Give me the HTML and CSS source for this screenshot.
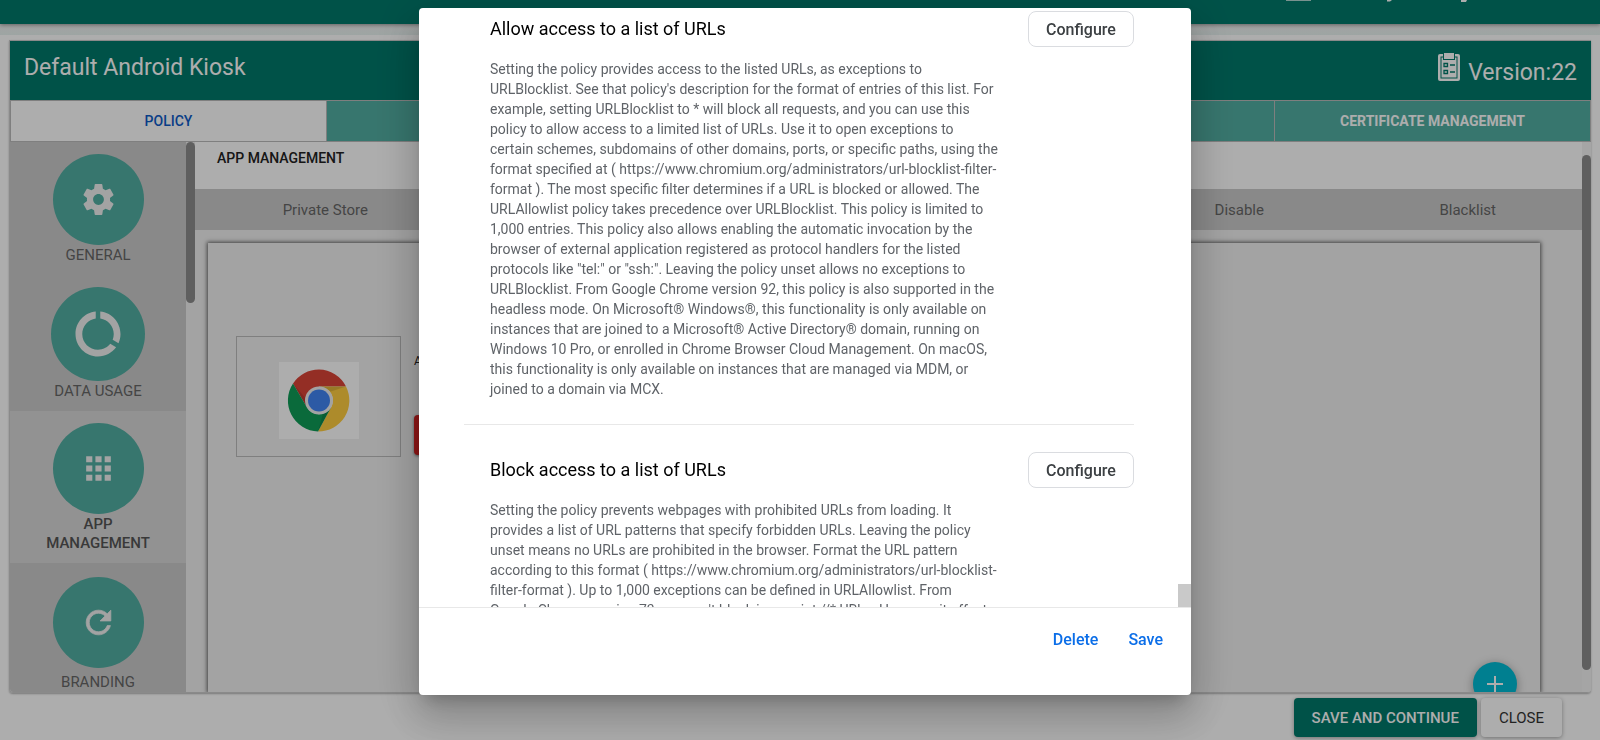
FILE: index.html
```html
<!DOCTYPE html>
<html lang="en">
<head>
<meta charset="utf-8">
<title>Default Android Kiosk</title>
<link rel="stylesheet" href="styles.css">
</head>
<body>
<div class="page">
  <header class="topbar">
    <svg class="topbar-marks" viewBox="0 0 184 3" aria-hidden="true"><path d="M0 0h25v1H0z" opacity=".7"/><path d="M101 0h5l-2 1.500h-3zM175 0h6l-1 2h-5z"/></svg>
  </header>
  <div class="strip"></div>

  <main class="profile">
    <div class="profile-head">
      <h1 class="profile-name">Default Android Kiosk</h1>
      <div class="version">
        <svg class="clipboard" viewBox="0 0 22 28" aria-hidden="true">
          <rect x="0" y="1" width="22" height="27" rx="2" fill="#fff"/>
          <rect x="3" y="4" width="16" height="21" fill="none" stroke="#00796b"/>
          <path d="M5 0h12v7H5z" fill="#00796b"/><path d="M6 0h10v6H6z" fill="#fff"/>
          <path d="M6 10.500h3.500v3H6zM6 17.500h3.500v3H6z" fill="#fff" stroke="#00796b" stroke-width="1.300"/>
          <path d="M12 12h5M12 19h5" stroke="#00796b" stroke-width="1.300"/>
        </svg>
        <span class="version-text">Version:22</span>
      </div>
    </div>

    <nav class="tabs">
      <button class="tab tab-active">POLICY</button>
      <button class="tab" aria-label="Second tab"></button>
      <button class="tab" aria-label="Third tab"></button>
      <button class="tab" aria-label="Fourth tab"></button>
      <button class="tab">CERTIFICATE MANAGEMENT</button>
    </nav>

    <div class="workspace">
      <nav class="sidebar">
        <a class="side-item" href="#general">
          <span class="disc"><svg class="icon" viewBox="0 0 24 24"><path d="M19.430 12.980c.04-.32.07-.64.07-.98s-.03-.66-.07-.98l2.110-1.650c.19-.15.24-.42.12-.64l-2-3.460c-.12-.22-.39-.3-.61-.22l-2.490 1c-.52-.4-1.080-.73-1.690-.98l-.38-2.650C14.460 2.180 14.250 2 14 2h-4c-.25 0-.46.18-.49.42l-.38 2.650c-.61.25-1.170.59-1.690.98l-2.490-1c-.23-.09-.49 0-.61.22l-2 3.460c-.13.22-.07.49.12.64l2.110 1.650c-.04.32-.07.65-.07.98s.03.66.07.98l-2.110 1.650c-.19.15-.24.42-.12.64l2 3.460c.12.22.39.3.61.22l2.490-1c.52.4 1.080.73 1.690.98l.38 2.650c.03.24.24.42.49.42h4c.25 0 .46-.18.49-.42l.38-2.650c.61-.25 1.170-.59 1.690-.98l2.490 1c.23.09.49 0 .61-.22l2-3.460c.12-.22.07-.49-.12-.64l-2.110-1.650zM12 15.500c-1.930 0-3.500-1.570-3.500-3.500s1.570-3.500 3.500-3.500 3.500 1.570 3.500 3.500-1.570 3.500-3.500 3.500z"/></svg></span>
          <span class="side-label">GENERAL</span>
        </a>
        <a class="side-item" href="#usage">
          <span class="disc disc-large"><svg class="icon icon-large" viewBox="0 0 24 24"><path d="M13 2.050v3.030c3.390.49 6 3.390 6 6.920 0 .9-.18 1.750-.48 2.540l2.600 1.530c.56-1.240.88-2.620.88-4.070 0-5.180-3.950-9.450-9-9.950zM12 19c-3.870 0-7-3.130-7-7 0-3.530 2.610-6.430 6-6.920V2.050c-5.060.5-9 4.760-9 9.950 0 5.520 4.470 10 9.990 10 3.310 0 6.240-1.610 8.060-4.090l-2.600-1.530C16.170 17.980 14.210 19 12 19z"/></svg></span>
          <span class="side-label">DATA USAGE</span>
        </a>
        <a class="side-item side-active" href="#apps">
          <span class="disc"><svg class="icon" viewBox="0 0 24 24"><path d="M4 8h4V4H4v4zm6 12h4v-4h-4v4zm-6 0h4v-4H4v4zm0-6h4v-4H4v4zm6 0h4v-4h-4v4zm6-10v4h4V4h-4zm-6 4h4V4h-4v4zm6 6h4v-4h-4v4zm0 6h4v-4h-4v4z"/></svg></span>
          <span class="side-label">APP MANAGEMENT</span>
        </a>
        <a class="side-item side-last" href="#branding">
          <span class="disc"><svg class="icon" viewBox="0 0 24 24"><path d="M17.650 6.350C16.200 4.900 14.210 4 12 4c-4.420 0-7.990 3.580-7.990 8s3.570 8 7.990 8c3.730 0 6.840-2.550 7.730-6h-2.080c-.82 2.330-3.040 4-5.650 4-3.310 0-6-2.690-6-6s2.690-6 6-6c1.660 0 3.140.69 4.220 1.780L13 11h7V4l-2.350 2.350z" stroke="#f0f0f0" stroke-width=".5"/></svg></span>
          <span class="side-label">BRANDING</span>
        </a>
      </nav>
      <div class="side-scroll"><div class="side-thumb"></div></div>

      <section class="content">
        <h2 class="content-title">APP MANAGEMENT</h2>
        <nav class="subtabs">
          <button class="subtab">Private Store</button>
          <button class="subtab" aria-label="Second list"></button>
          <button class="subtab" aria-label="Third list"></button>
          <button class="subtab" aria-label="Fourth list"></button>
          <button class="subtab">Disable</button>
          <button class="subtab">Blacklist</button>
        </nav>
        <div class="canvas">
          <div class="apps">
            <div class="app-tile">
              <svg class="chrome" viewBox="0 0 80 77" role="img" aria-label="Chrome">
                <rect width="80" height="77" fill="#fff"/>
                <g transform="translate(40 38.500)">
                  <path d="M0-31A31 31 0 0 1 27-14H0L-12 7-26-17A31 31 0 0 1 0-31Z" fill="#db4437"/>
                  <path d="M27-14A31 31 0 0 1-1 31L12 7A14 14 0 0 0 0-14Z" fill="#ffcd40"/>
                  <path d="M-26-17A31 31 0 0 0-1 31L12 7A14 14 0 0 1-12 7Z" fill="#0f9d58"/>
                  <path d="M0-14H27L12-9ZM-26-17-12 7-14-3ZM-1 31 12 7 4 13Z" fill="#000" opacity=".12"/>
                  <circle r="14" fill="#f1f1f1"/><circle r="11" fill="#4285f4"/>
                </g>
              </svg>
            </div>
            <div class="app-info">
              <span class="app-name">App</span>
              <button class="app-remove" aria-label="Remove"></button>
            </div>
          </div>
          <button class="fab" aria-label="Add"><svg viewBox="0 0 24 24" class="plus"><path d="M20 13h-7v7h-2v-7H4v-2h7V4h2v7h7z"/></svg></button>
        </div>
      </section>
      <div class="main-scroll"><div class="main-thumb"></div></div>
    </div>
  </main>

  <footer class="actions">
    <button class="btn btn-primary">SAVE AND CONTINUE</button>
    <button class="btn">CLOSE</button>
  </footer>
</div>

<div class="backdrop">
  <div class="dialog" role="dialog" aria-modal="true" aria-label="Managed configuration">
    <div class="dialog-body">
      <section class="policy">
        <div class="policy-text">
          <h3 class="policy-title">Allow access to a list of URLs</h3>
          <p class="policy-desc">Setting the policy provides access to the listed URLs, as exceptions to<br>URLBlocklist. See that policy's description for the format of entries of this list. For<br>example, setting URLBlocklist to * will block all requests, and you can use this<br>policy to allow access to a limited list of URLs. Use it to open exceptions to<br>certain schemes, subdomains of other domains, ports, or specific paths, using the<br>format specified at ( https://www.chromium.org/administrators/url-blocklist-filter-<br>format ). The most specific filter determines if a URL is blocked or allowed. The<br>URLAllowlist policy takes precedence over URLBlocklist. This policy is limited to<br>1,000 entries. This policy also allows enabling the automatic invocation by the<br>browser of external application registered as protocol handlers for the listed<br>protocols like "tel:" or "ssh:". Leaving the policy unset allows no exceptions to<br>URLBlocklist. From Google Chrome version 92, this policy is also supported in the<br>headless mode. On Microsoft® Windows®, this functionality is only available on<br>instances that are joined to a Microsoft® Active Directory® domain, running on<br>Windows 10 Pro, or enrolled in Chrome Browser Cloud Management. On macOS,<br>this functionality is only available on instances that are managed via MDM, or<br>joined to a domain via MCX.</p>
        </div>
        <button class="configure">Configure</button>
      </section>
      <section class="policy">
        <div class="policy-text">
          <h3 class="policy-title">Block access to a list of URLs</h3>
          <p class="policy-desc">Setting the policy prevents webpages with prohibited URLs from loading. It<br>provides a list of URL patterns that specify forbidden URLs. Leaving the policy<br>unset means no URLs are prohibited in the browser. Format the URL pattern<br>according to this format ( https://www.chromium.org/administrators/url-blocklist-<br>filter-format ). Up to 1,000 exceptions can be defined in URLAllowlist. From<br>Google Chrome version 73, you can't block javascript://* URLs. However, it affects</p>
        </div>
        <button class="configure">Configure</button>
      </section>
      <div class="dialog-thumb"></div>
    </div>
    <div class="dialog-foot">
      <button class="link-btn">Delete</button>
      <button class="link-btn">Save</button>
    </div>
  </div>
</div>
</body>
</html>
```
FILE: styles.css
```css
* { box-sizing: border-box; }
body { margin: 0; font-family: Roboto, sans-serif; background: #fff; overflow: hidden; }
button { font-family: inherit; border: 0; padding: 0; background: none; cursor: pointer; }
h1, h2, h3, p { margin: 0; }

.page { height: 100vh; display: flex; flex-direction: column; }
.topbar { flex: none; height: 24px; padding-right: 130px; background: #00796b; display: flex; justify-content: flex-end; align-items: flex-start; box-shadow: 0 1px 4px rgba(0,0,0,.4); z-index: 1; }
.topbar-marks { width: 184px; height: 3px; fill: #fff; }
.strip { flex: none; height: 11px; background: linear-gradient(#f0f0f0, #e8f3f1); }

.profile { flex: 1; min-height: 0; margin: 5px 9px 0 9px; border: 1px solid #ccc; border-width: 1px 0 1px 1px; border-radius: 0 0 4px 4px; display: flex; flex-direction: column; overflow: hidden; box-shadow: 0 1px 2px rgba(0,0,0,.3); }
.profile-head { flex: none; height: 59px; padding: 0 14px; background: #00796b; color: #fff; display: flex; justify-content: space-between; align-items: center; font-size: 23px; }
.profile-name { font-size: 23px; line-height: 28px; font-weight: 400; padding-bottom: 6px; }
.version { display: flex; gap: 8px; align-items: flex-start; padding-bottom: 2px; }
.clipboard { width: 22px; height: 28px; }
.version-text { line-height: 28px; padding-top: 6px; }

.tabs { flex: none; height: 42px; display: flex; gap: 1px; padding: 1px; background: #bbb; }
.tab { flex: 1; background: #52aea2; color: #fff; font-size: 14px; font-weight: 700; }
.tab-active { background: #fff; color: #0d5bc7; font-weight: 500; }

.workspace { flex: 1; min-height: 0; display: flex; overflow: hidden; background: #f0f0f0; }
.sidebar { flex: none; width: 176px; background: #cbcbcb; overflow: hidden; }
.side-item { display: flex; flex-direction: column; align-items: center; padding: 12px 12px 10px; color: #666; text-decoration: none; font-size: 15px; line-height: 19px; text-align: center; }
.side-label { width: 120px; padding-top: 1px; }
.side-active { background: #d8d8d8; color: #555; font-weight: 500; }
.side-last { padding-top: 14px; gap: 4px; }
.disc { width: 91px; height: 91px; border-radius: 50%; background: #52aea2; display: flex; align-items: center; justify-content: center; }
.disc-large { width: 94px; height: 94px; }
.icon { width: 37px; height: 37px; fill: #f0f0f0; }
.icon-large { width: 54px; height: 54px; }
.side-scroll, .main-scroll { flex: none; width: 9px; }
.side-thumb { height: 161px; border-radius: 5px; background: #8c8c8c; }
.main-scroll { background: #f4f4f4; padding: 13px 0 22px; }
.main-thumb { height: 100%; border-radius: 5px; background: #8c8c8c; }

.content { flex: 1; min-width: 0; display: flex; flex-direction: column; }
.content-title { flex: none; height: 47px; padding: 6px 22px; background: #fff; font-size: 14px; line-height: 20px; font-weight: 500; color: #222; }
.subtabs { flex: none; height: 41px; padding-left: 16px; display: flex; background: #cbcbcb; }
.subtab { flex: 1; font-size: 15px; color: #666; }
.canvas { flex: 1; position: relative; margin: 13px 42px 0 13px; padding: 93px 28px 0; box-shadow: 0 0 4px 1px rgba(0,0,0,.6); }
.apps { display: flex; gap: 13px; }
.app-tile { width: 165px; height: 121px; border: 1px solid #bbb; display: flex; align-items: center; justify-content: center; padding-top: 8px; }
.chrome { width: 80px; height: 77px; }
.app-info { display: flex; flex-direction: column; gap: 46px; padding-top: 18px; font-size: 12px; line-height: 15px; color: #222; }
.app-remove { width: 80px; height: 40px; border-radius: 4px; background: #d32020; box-shadow: 0 1px 3px rgba(0,0,0,.5); }
.fab { position: absolute; right: 23px; bottom: -14px; width: 44px; height: 44px; border-radius: 50%; background: #00bcd4; box-shadow: 0 2px 10px rgba(0,0,0,.35); display: flex; align-items: center; justify-content: center; }
.plus { width: 24px; height: 24px; fill: #fff; }

.actions { flex: none; height: 47px; padding: 5px 38px 3px; display: flex; justify-content: flex-end; gap: 4px; }
.btn { padding: 0 18px; border-radius: 4px; background: #fff; color: #333; font-size: 15px; box-shadow: 0 1px 4px rgba(0,0,0,.35); }
.btn-primary { background: #00796b; color: #fff; font-weight: 500; }

.backdrop { position: fixed; inset: 0; z-index: 2; padding: 8px 0 45px 10px; display: flex; justify-content: center; background: rgba(0,0,0,.32); }
.dialog { width: 772px; border-radius: 4px; background: #fff; display: flex; flex-direction: column; overflow: hidden; box-shadow: 0 11px 15px -7px rgba(0,0,0,.2), 0 24px 38px 3px rgba(0,0,0,.14), 0 9px 46px 8px rgba(0,0,0,.12); }
.dialog-body { position: relative; flex: 1; min-height: 0; overflow: hidden; padding: 0 57px 0 45px; }
.policy { display: flex; justify-content: space-between; align-items: flex-start; padding: 3px 0 25px 26px; }
.policy + .policy { border-top: 1px solid #e8e8e8; padding-top: 27px; }
.policy-title { padding-top: 6px; font-size: 18px; line-height: 24px; font-weight: 400; color: #000; }
.policy-desc { padding-top: 18px; font-size: 14px; line-height: 20px; color: #5f6368; white-space: nowrap; }
.configure { width: 106px; height: 36px; flex: none; border: 1px solid #dadce0; border-radius: 8px; background: #fff; font-size: 16px; font-weight: 500; color: #3c4043; }
.dialog-thumb { position: absolute; right: 0; bottom: 0; width: 13px; height: 23px; background: #c9c9c9; }
.dialog-foot { flex: none; height: 88px; border-top: 1px solid #e8e8e8; padding: 16px 28px; display: flex; justify-content: flex-end; align-items: flex-start; gap: 30px; }
.link-btn { height: 30px; font-size: 16px; font-weight: 500; color: #0b6ee8; }
```
